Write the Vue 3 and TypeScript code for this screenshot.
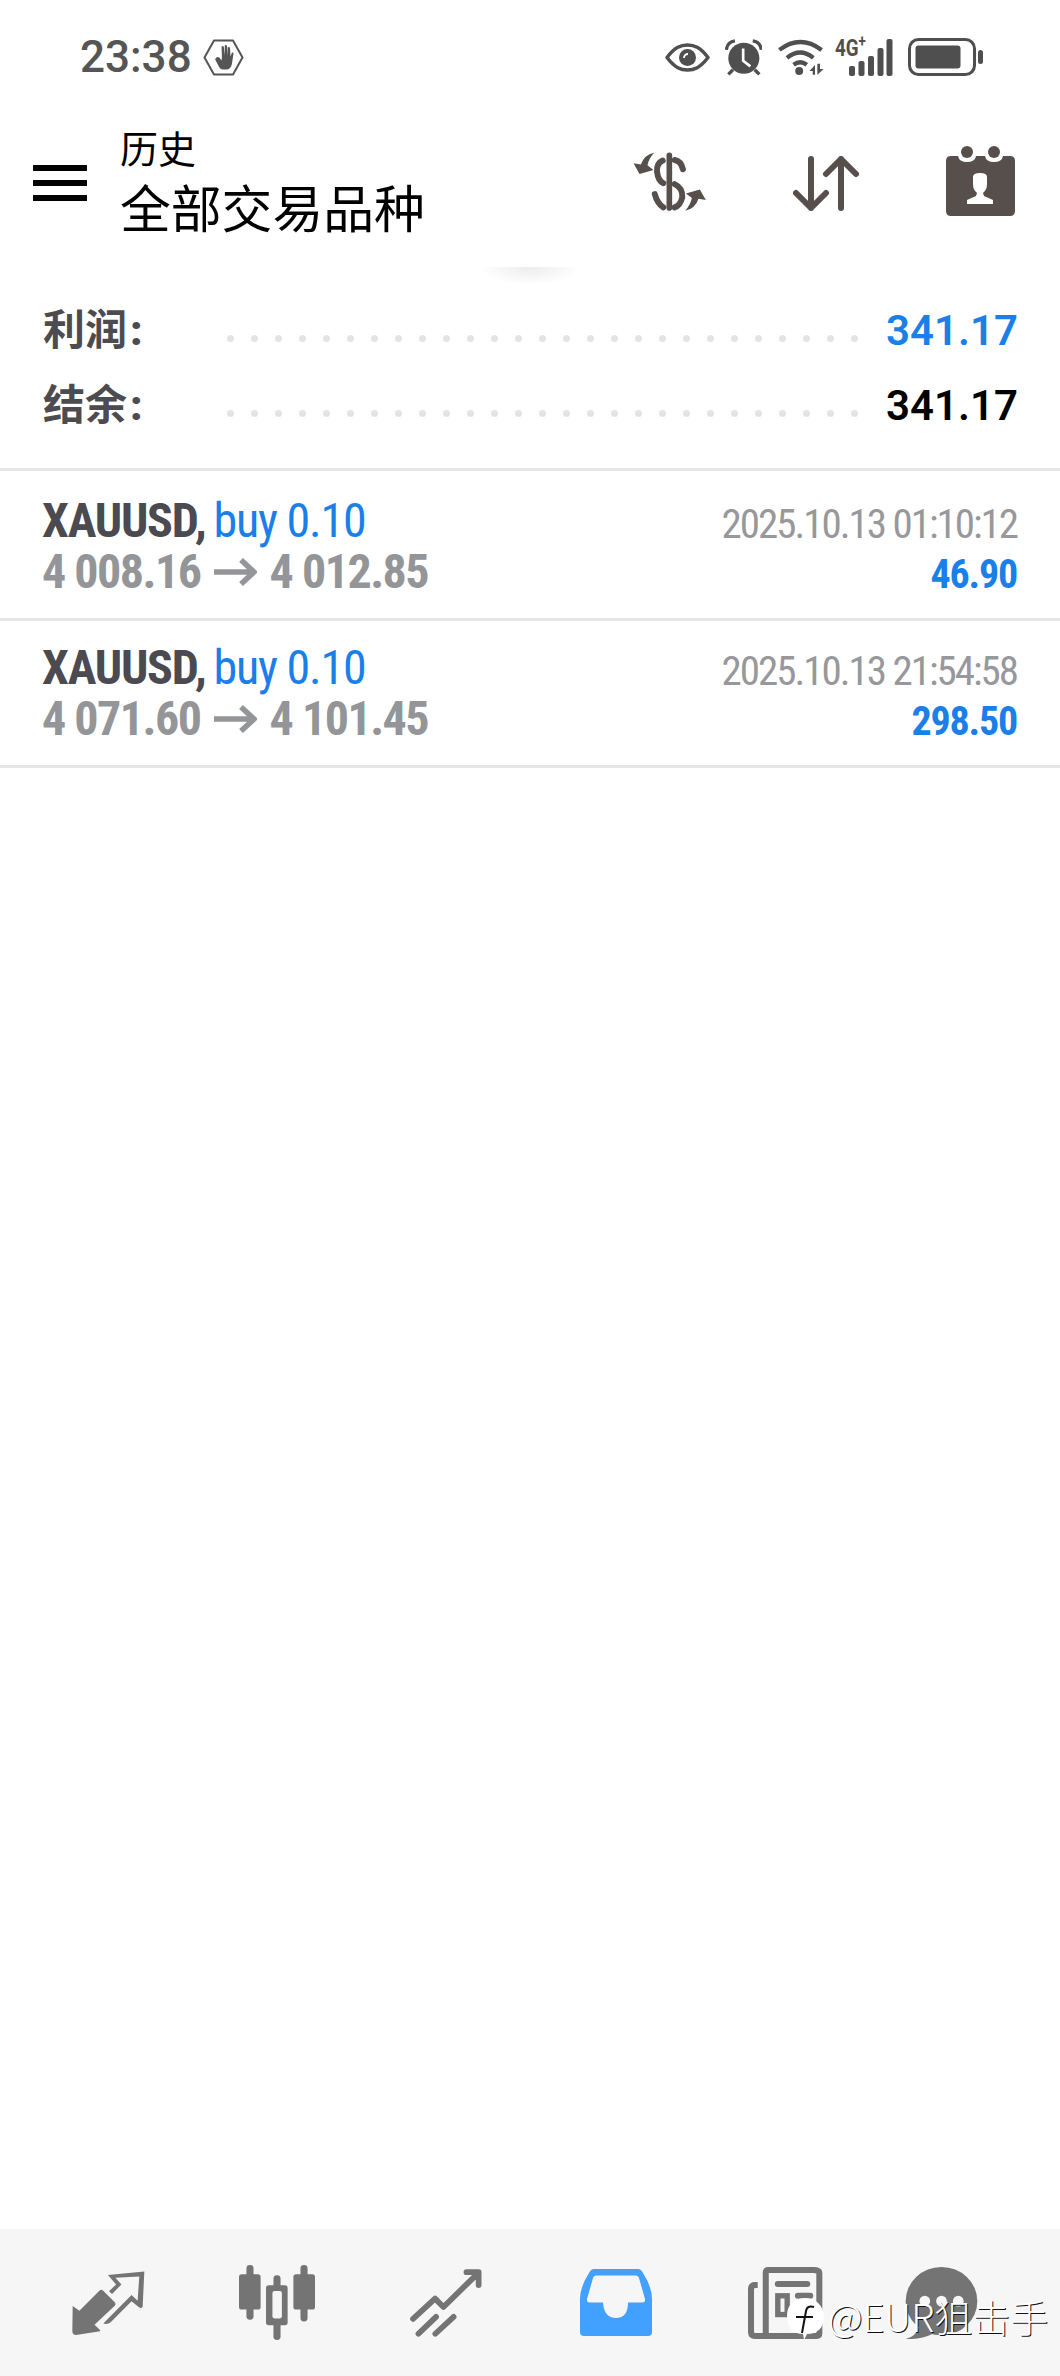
<script setup lang="ts">
interface Deal {
  symbol: string
  side: string
  from: string
  to: string
  time: string
  profit: string
}

const deals: Deal[] = [
  { symbol: 'XAUUSD,', side: 'buy 0.10', from: '4 008.16', to: '4 012.85', time: '2025.10.13 01:10:12', profit: '46.90' },
  { symbol: 'XAUUSD,', side: 'buy 0.10', from: '4 071.60', to: '4 101.45', time: '2025.10.13 21:54:58', profit: '298.50' }
]
const dots = Array.from({ length: 27 }, (_, i) => i)
</script>

<template>
  <div class="page">
    <div class="status">
      <div class="status-left">
        <span class="clock">23:38</span>
        <svg class="hex" width="41" height="37" viewBox="0 0 41 37">
          <path d="M11 1.500h19l9.500 17-9.500 17H11L1.500 18.500z" fill="none" stroke="#555" stroke-width="2" stroke-linejoin="round" />
          <path d="M11.500 19l3.500 7q2 4.500 5 4.500h3q5 0 6-6l1.500-10q0-1.500-1.500-1l-1.500 4-.5-9q-1.500-1-2.200 0l-.3 8-.5-10q-1.500-1-2.200 0l-.2 10-.8-9q-1.500-1-2.200 0l.3 11-.5 3-2-3q-3.500-1.500-3.500 1.500z" fill="#555" />
        </svg>
      </div>
      <div class="status-right">
        <svg width="45" height="29" viewBox="0 0 45 29">
          <path d="M2 14.500C10 4 16 2 22.500 2S35 4 43 14.500C35 25 29 27 22.500 27S10 25 2 14.500z" fill="none" stroke="#4f4f4f" stroke-width="3.500" stroke-linejoin="round" />
          <circle cx="22.500" cy="14.500" r="8.500" fill="#4f4f4f" />
          <path d="M19 15a4 4 0 0 1 4-4" fill="none" stroke="#fff" stroke-width="1.800" />
        </svg>
        <svg width="37" height="37" viewBox="198 30 112 110">
          <circle cx="255" cy="87" r="47" fill="#4f4f4f" />
          <path d="M202 62q3-24 26-27M308 62q-3-24-26-27M208 136l14-14M302 136l-14-14" fill="none" stroke="#4f4f4f" stroke-width="10" />
          <path d="M253 58v37l22 17" fill="none" stroke="#fff" stroke-width="8" />
        </svg>
        <svg width="47" height="37" viewBox="355 25 142 112">
          <path d="M362 58q63-48 128 0M385 82q40-32 80 0M405 103q20-15 40 0" fill="none" stroke="#4f4f4f" stroke-width="13" />
          <circle cx="422" cy="122" r="12" fill="#4f4f4f" />
          <path d="M470 133V104l-17 18h10v11zM477 100v33l19-17h-11v-16z" fill="#4f4f4f" />
        </svg>
        <div class="cell">
          <span class="net">4G<sup>+</sup></span>
          <svg width="44" height="37" viewBox="0 0 44 37">
            <rect x="0" y="27" width="6" height="10" rx="2" fill="#4f4f4f" />
            <rect x="9.500" y="22" width="6" height="15" rx="2" fill="#4f4f4f" />
            <rect x="19" y="17" width="6" height="20" rx="2" fill="#4f4f4f" />
            <rect x="28.500" y="9" width="6" height="28" rx="2" fill="#4f4f4f" />
            <rect x="37.500" y="0" width="6" height="37" rx="2" fill="#4f4f4f" />
          </svg>
        </div>
        <svg width="75" height="38" viewBox="0 0 75 38">
          <rect x="1.500" y="1.500" width="65" height="35" rx="9" fill="none" stroke="#4f4f4f" stroke-width="3" />
          <rect x="7.500" y="7.500" width="45" height="23" rx="3" fill="#4f4f4f" />
          <rect x="70" y="12" width="5" height="14" rx="2.500" fill="#4f4f4f" />
        </svg>
      </div>
    </div>

    <header class="toolbar">
      <button class="menu"><i></i><i></i><i></i></button>
      <div class="titles">
        <div class="title-small">历史</div>
        <div class="title-big">全部交易品种</div>
      </div>
      <div class="tools">
        <svg class="tool-dollar" width="75" height="63" viewBox="25 35 225 190">
          <g fill="none" stroke="#574f4c" stroke-width="18" stroke-linecap="round">
            <path d="M134 48v159" stroke-width="17" />
            <path d="M114 64q-19 8-17 34 3 27 19 34M150 62q19 3 25 28M150 135q25 12 23 40-6 25-23 30M116 205q-18-10-26-40" />
          </g>
          <path d="M88 40Q58 46 48 76L26 72l18 32 42-12-18-14Q72 58 88 40z" fill="#574f4c" />
          <path d="M88 40Q58 46 48 76L26 72l18 32 42-12-18-14Q72 58 88 40z" fill="#574f4c" transform="rotate(180 135 127.500)" />
        </svg>
        <svg class="tool-sort" width="66" height="55" viewBox="0 0 66 55">
          <path d="M18 3v49M3 37l15 15 15-15M48 52V3M33 18L48 3l15 15" fill="none" stroke="#574f4c" stroke-width="6" stroke-linecap="round" stroke-linejoin="round" />
        </svg>
        <svg class="tool-cal" width="69" height="70" viewBox="0 0 69 70">
          <circle cx="21" cy="6" r="6" fill="#574f4c" />
          <circle cx="48" cy="6" r="6" fill="#574f4c" />
          <path d="M5 10h7q1 6 9 6t9-6h9q1 6 9 6t9-6h7q5 0 5 5v50q0 5-5 5H5q-5 0-5-5V15q0-5 5-5z" fill="#574f4c" />
          <path d="M21 58v-4l9-4 1-3q-4-3-4-9v-7q0-4 7-4t7 4v7q0 6-4 9l1 3 9 4v4z" fill="#fff" />
        </svg>
      </div>
      <div class="toolbar-shadow"></div>
    </header>

    <section class="summary">
      <div class="sum-row">
        <span class="sum-label">利润<b>:</b></span>
        <span class="leader"><i v-for="d in dots" :key="d"></i></span>
        <span class="sum-value blue">341.17</span>
      </div>
      <div class="sum-row">
        <span class="sum-label">结余<b>:</b></span>
        <span class="leader"><i v-for="d in dots" :key="d"></i></span>
        <span class="sum-value">341.17</span>
      </div>
    </section>

    <ul class="deals">
      <li v-for="deal in deals" :key="deal.time" class="deal">
        <div class="deal-left">
          <div class="deal-head"><b class="symbol">{{ deal.symbol }}</b><span class="side">{{ deal.side }}</span></div>
          <div class="prices">
            <span>{{ deal.from }}</span>
            <svg class="arrow" width="43" height="28" viewBox="0 0 43 28">
              <path d="M0 14h40M27 2l13 12-13 12" fill="none" stroke="#939598" stroke-width="5.500" />
            </svg>
            <span>{{ deal.to }}</span>
          </div>
        </div>
        <div class="deal-right">
          <div class="time">{{ deal.time }}</div>
          <div class="profit">{{ deal.profit }}</div>
        </div>
      </li>
    </ul>

    <nav class="tabs">
      <svg width="73" height="64" viewBox="213 212 217 190">
        <path d="M215 316L235 330 295 270q5-5 10 0l35 35q5 5 0 10l-60 57 17 16q0 4-5 4l-67 10q-10 0-11-10z" fill="#747474" />
        <path d="M320 224L428 213l-5 105q-3 7-11 2l-22-18-62 62q-10 8-22 4l84-85 18 17 5-72-71 4 18 20-28 28-9-8 21-20z" fill="#747474" />
      </svg>
      <svg width="76" height="75" viewBox="707 195 225 222">
        <g fill="#747474">
          <rect x="707" y="222" width="64" height="105" rx="8" />
          <rect x="729" y="195" width="21" height="162" rx="10" />
          <rect x="868" y="222" width="64" height="105" rx="8" />
          <rect x="889" y="195" width="21" height="167" rx="10" />
          <rect x="809" y="225" width="21" height="192" rx="10" />
          <rect x="787" y="255" width="64" height="118" rx="8" />
        </g>
        <rect x="806" y="272" width="28" height="81" rx="6" fill="#f6f6f6" />
      </svg>
      <svg width="72" height="68" viewBox="1213 203 213 200">
        <path d="M1222 350L1287 290l25 25 104-102M1380 212h36v38M1238 394l52-50M1288 394l54-50" fill="none" stroke="#747474" stroke-width="17" stroke-linecap="round" stroke-linejoin="round" />
      </svg>
      <svg width="72" height="67" viewBox="0 0 72 67">
        <path d="M14 0H58q3 0 5 4 9 14 9 26v33q0 4-4 4H4q-4 0-4-4V30Q0 18 9 4q2-4 5-4z" fill="#42a0ff" />
        <path d="M16 6.500H56q2.500 0 3 2.500l6 21q.5 3.500-2 3.500H48Q48 49 36 49T23 33.500H9q-2.500 0-2-3.500L13 9q.5-2.500 3-2.500z" fill="#f6f6f6" />
      </svg>
      <svg width="76" height="72" viewBox="643 195 223 215">
        <g fill="none" stroke="#747474">
          <path d="M697 410V212q0-8 8-8h134q18 0 18 8v181q0 8-8 8H665q-12 0-12-12V262q0-13 13-13h7" stroke-width="18" />
          <path d="M733 246h88M793 281h37M793 316h37" stroke-width="18" stroke-linecap="round" />
          <rect x="733" y="281" width="28" height="56" stroke-width="16" />
        </g>
      </svg>
      <svg width="73" height="72" viewBox="1108 195 214 215">
        <ellipse cx="1215" cy="297" rx="107" ry="102" fill="#747474" />
        <path d="M1150 370q-12 35-42 40 45 2 80-15z" fill="#747474" />
        <circle cx="1165" cy="297" r="16" fill="#f6f6f6" />
        <circle cx="1215" cy="297" r="16" fill="#f6f6f6" />
        <circle cx="1265" cy="297" r="16" fill="#f6f6f6" />
      </svg>
    </nav>

    <div class="watermark">
      <svg width="37" height="42" viewBox="0 0 37 42">
        <path d="M18 0c11 0 19 8 19 19S30 36 20 36l-3 6-1-6C6 36 0 29 0 18S7 0 18 0z" fill="#fff" />
        <path d="M27 9q-7-2-8 4l-4 22M9 19h17" fill="none" stroke="#111" stroke-width="2" />
      </svg>
      <span>@EUR狙击手</span>
    </div>
  </div>
</template>

<style>
body {
  margin: 0;
  background: #fff;
}
</style>

<style scoped>
.page {
  position: relative;
  width: 1060px;
  height: 2376px;
  background: #fff;
  font-family: Roboto, "Noto Sans CJK SC", sans-serif;
  display: flex;
  flex-direction: column;
  overflow: hidden;
}
.status {
  padding: 38px 77px 39px 80px;
  height: 38px;
  display: flex;
  justify-content: space-between;
  align-items: center;
}
.status-left {
  display: flex;
  align-items: center;
  gap: 11px;
}
.clock {
  font-size: 44px;
  font-weight: 500;
  color: #555;
  line-height: 40px;
}
.status-right {
  display: flex;
  align-items: center;
  gap: 15px;
}
.cell {
  position: relative;
  width: 58px;
  height: 37px;
  margin-left: -4px;
  display: flex;
  justify-content: flex-end;
}
.net {
  position: absolute;
  left: 0;
  top: -5px;
  font-size: 24px;
  font-weight: 700;
  color: #4f4f4f;
  transform: scaleX(.78);
  transform-origin: left top;
}
.net sup {
  font-size: 17px;
  line-height: 0;
}
.toolbar {
  position: relative;
  height: 178px;
  padding-left: 33px;
  display: flex;
  align-items: flex-start;
}
.menu {
  border: 0;
  padding: 0;
  margin: 50px 0 0;
  background: none;
  width: 54px;
  display: flex;
  flex-direction: column;
  gap: 9px;
}
.menu i {
  display: block;
  height: 6px;
  background: #000;
}
.titles {
  margin: 11px 0 0 33px;
  color: #000;
}
.title-small {
  font-size: 38px;
  line-height: 48px;
}
.title-big {
  font-size: 50.800px;
  line-height: 66px;
  margin-top: 4px;
}
.tools {
  position: absolute;
  top: 32px;
  right: 45px;
  display: flex;
  align-items: flex-start;
  gap: 87px;
}
.tool-dollar {
  margin-top: 4px;
  margin-right: -2px;
}
.tool-sort {
  margin-top: 9px;
}
.tool-cal {
  margin-top: -1px;
}
.toolbar-shadow {
  position: absolute;
  left: 480px;
  top: 152px;
  width: 100px;
  height: 18px;
  background: radial-gradient(ellipse 50px 18px at 50% 0, #ececec, rgba(255, 255, 255, 0));
}
.summary {
  height: 175px;
  padding: 0 42px 0 43px;
  box-sizing: border-box;
}
.sum-row {
  height: 75px;
  display: flex;
  align-items: center;
}
.sum-label {
  width: 184px;
  margin-bottom: 9px;
  font-size: 42px;
  font-weight: 700;
  color: #4c4c50;
}
.sum-label b {
  margin-left: 3px;
}
.leader {
  display: flex;
  gap: 17px;
  margin-top: 15px;
}
.leader i {
  width: 7px;
  height: 7px;
  border-radius: 50%;
  background: #e4e4e4;
}
.sum-value {
  margin-left: auto;
  font-size: 42px;
  font-weight: 600;
  color: #000;
}
.blue {
  color: #1a7fe8;
}
.deals {
  list-style: none;
  margin: 0;
  padding: 0;
  border-top: 3px solid #e6e6e6;
}
.deal {
  height: 144px;
  padding: 0 43px 0 42px;
  display: flex;
  justify-content: space-between;
  border-bottom: 3px solid #e6e6e6;
}
.deal:first-child {
  padding-top: 3px;
}
.deal-left,
.deal-right {
  font-family: "Roboto Condensed", Roboto, sans-serif;
  font-stretch: 75%;
}
.deal-left {
  padding-top: 21px;
  font-size: 48px;
  line-height: 51px;
}
.deal-head {
  display: flex;
  gap: 8px;
  letter-spacing: -1.200px;
}
.symbol {
  font-weight: 700;
  color: #4a4a50;
}
.side {
  color: #1a7fe8;
}
.prices {
  display: flex;
  align-items: center;
  gap: 13px;
  font-weight: 700;
  letter-spacing: -1.500px;
  color: #939598;
}
.deal-right {
  text-align: right;
}
.time {
  padding-top: 27px;
  font-size: 41px;
  line-height: 46px;
  letter-spacing: -2px;
  color: #98989c;
}
.profit {
  margin-top: 6px;
  font-size: 40px;
  line-height: 44px;
  letter-spacing: -1.200px;
  font-weight: 700;
  color: #1a7fe8;
}
.tabs {
  position: absolute;
  left: 0;
  right: 0;
  bottom: 0;
  height: 147px;
  background: #f6f6f6;
  display: grid;
  grid-template-columns: 167px 171px 170px 167px 158px 1fr;
  align-items: center;
  justify-items: start;
  padding-left: 72px;
}
.watermark {
  position: absolute;
  left: 787px;
  top: 2296px;
  display: flex;
  align-items: flex-start;
  gap: 4px;
  color: #fff;
  font-family: "Noto Sans CJK SC", sans-serif;
  font-weight: 300;
  font-size: 38px;
  line-height: 40px;
  text-shadow: 1px 1px 0 #111;
}
.watermark svg {
  margin-top: 2px;
}
</style>
